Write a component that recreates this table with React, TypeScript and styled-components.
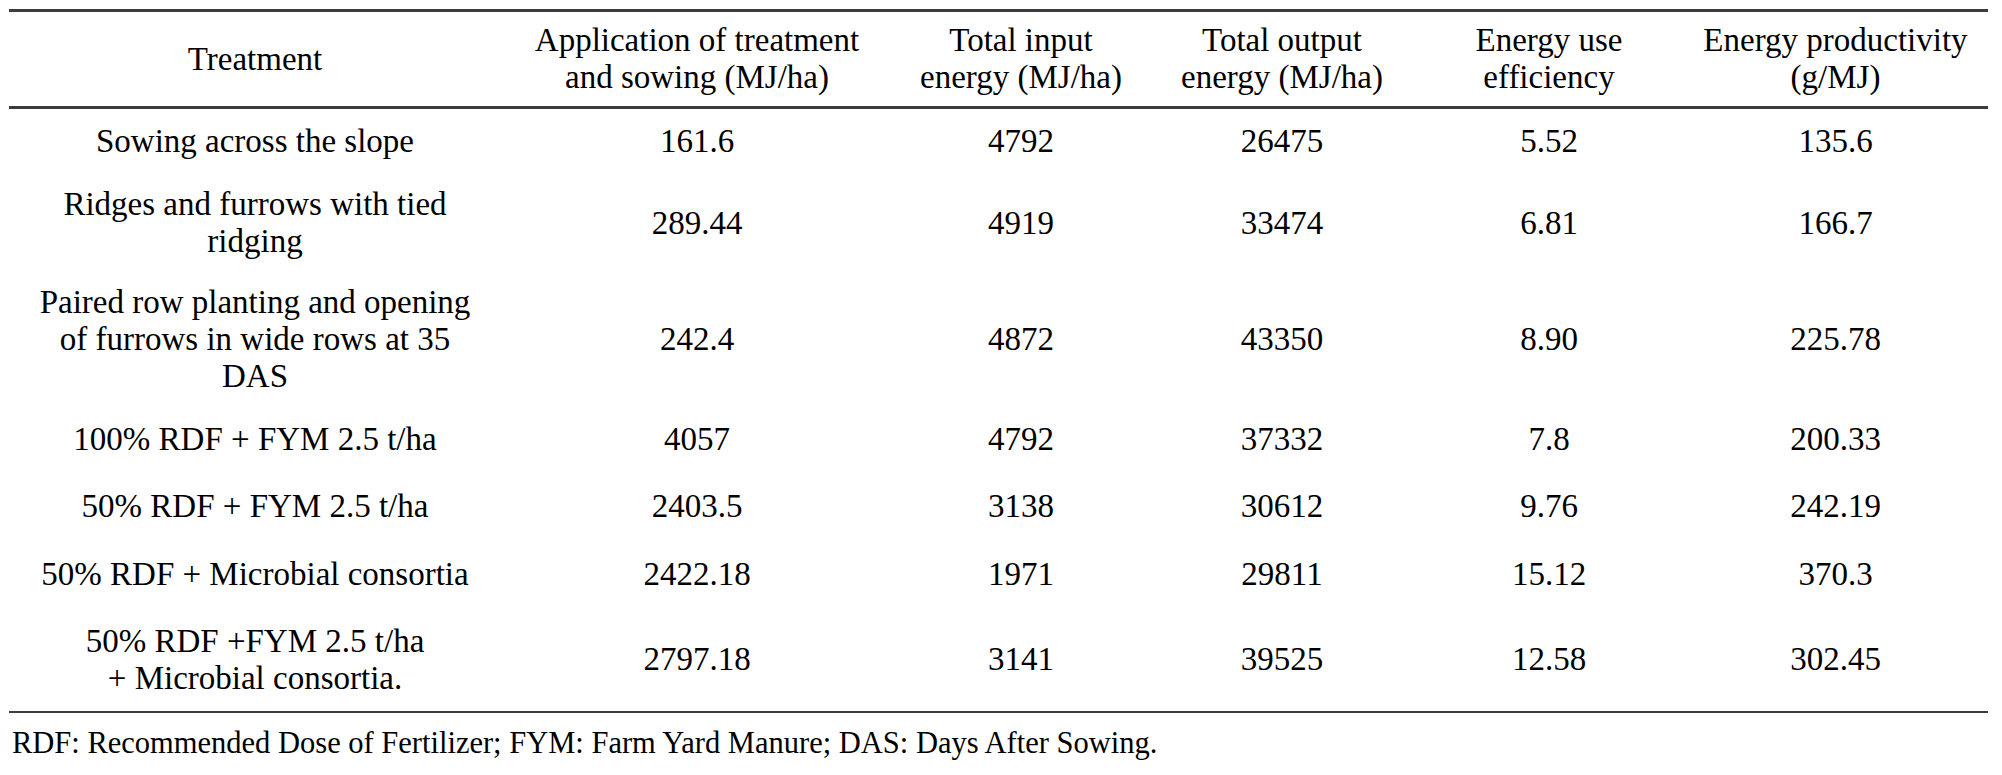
import React from "react";
import styled, { createGlobalStyle } from "styled-components";

const GlobalStyle = createGlobalStyle`
  html, body {
    margin: 0;
    padding: 0;
    background: #ffffff;
  }
  body {
    font-family: "Liberation Serif", "Times New Roman", serif;
    color: #000000;
  }
  * { box-sizing: border-box; }
`;

const COLUMNS = "492px 392px 256px 266px 268px 305px";

const Page = styled.div`
  padding: 9px 14px 0 9px;
  width: 2002px;
`;

const Table = styled.div`
  width: 1979px;
  display: flex;
  flex-direction: column;
`;

const HeadRow = styled.div`
  display: grid;
  grid-template-columns: ${COLUMNS};
  align-items: center;
  padding: 10px 0;
  border-top: 3px solid #3c3c3c;
  border-bottom: 3px solid #3c3c3c;
`;

const HeadCell = styled.div`
  font-size: 33px;
  line-height: 37px;
  text-align: center;
  padding: 0 12px;
  white-space: nowrap;
`;

const BodyRow = styled.div<{ $h: number; $last?: boolean }>`
  display: grid;
  grid-template-columns: ${COLUMNS};
  align-items: center;
  height: ${(p) => p.$h + (p.$last ? 2 : 0)}px;
  border-bottom: ${(p) => (p.$last ? "2px solid #3c3c3c" : "none")};
`;

const Cell = styled.div`
  font-size: 33px;
  line-height: 37px;
  text-align: center;
  padding: 0 20px;
  white-space: nowrap;
`;

const Footnote = styled.p`
  margin: 13px 0 0 3px;
  font-size: 30.5px;
  line-height: 35px;
  white-space: nowrap;
`;

type Row = {
  treatment: string[];
  values: string[];
  h: number;
};

const headers: string[][] = [
  ["Treatment"],
  ["Application of treatment", "and sowing (MJ/ha)"],
  ["Total input", "energy (MJ/ha)"],
  ["Total output", "energy (MJ/ha)"],
  ["Energy use", "efficiency"],
  ["Energy productivity", "(g/MJ)"],
];

const rows: Row[] = [
  { treatment: ["Sowing across the slope"], values: ["161.6", "4792", "26475", "5.52", "135.6"], h: 65 },
  { treatment: ["Ridges and furrows with tied", "ridging"], values: ["289.44", "4919", "33474", "6.81", "166.7"], h: 98 },
  {
    treatment: ["Paired row planting and opening", "of furrows in wide rows at 35", "DAS"],
    values: ["242.4", "4872", "43350", "8.90", "225.78"],
    h: 134,
  },
  { treatment: ["100% RDF + FYM 2.5 t/ha"], values: ["4057", "4792", "37332", "7.8", "200.33"], h: 66 },
  { treatment: ["50% RDF + FYM 2.5 t/ha"], values: ["2403.5", "3138", "30612", "9.76", "242.19"], h: 69 },
  { treatment: ["50% RDF + Microbial consortia"], values: ["2422.18", "1971", "29811", "15.12", "370.3"], h: 67 },
  {
    treatment: ["50% RDF +FYM 2.5 t/ha", "+ Microbial consortia."],
    values: ["2797.18", "3141", "39525", "12.58", "302.45"],
    h: 103,
  },
];

const Lines: React.FC<{ lines: string[] }> = ({ lines }) => (
  <>
    {lines.map((l, i) => (
      <React.Fragment key={i}>
        {i > 0 && <br />}
        {l}
      </React.Fragment>
    ))}
  </>
);

export default function App() {
  return (
    <>
      <GlobalStyle />
      <Page>
        <Table>
          <HeadRow>
            {headers.map((h, i) => (
              <HeadCell key={i}>
                <Lines lines={h} />
              </HeadCell>
            ))}
          </HeadRow>
          {rows.map((r, i) => (
            <BodyRow key={i} $h={r.h} $last={i === rows.length - 1}>
              <Cell>
                <Lines lines={r.treatment} />
              </Cell>
              {r.values.map((v, j) => (
                <Cell key={j}>{v}</Cell>
              ))}
            </BodyRow>
          ))}
        </Table>
        <Footnote>
          RDF: Recommended Dose of Fertilizer; FYM: Farm Yard Manure; DAS: Days After Sowing.
        </Footnote>
      </Page>
    </>
  );
}
